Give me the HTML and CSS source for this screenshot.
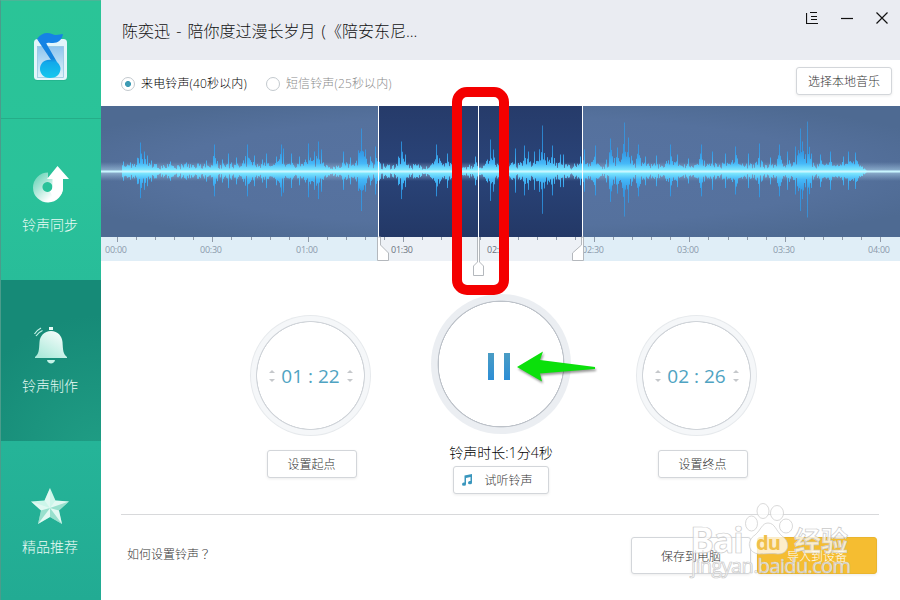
FILE: index.html
```html
<!DOCTYPE html>
<html lang="zh-CN">
<head>
    <meta charset="UTF-8">
    <meta name="viewport" content="width=device-width, initial-scale=1.0">
    <title>铃声制作</title>
    <link rel="stylesheet" href="styles.css">
</head>
<body>
    <div class="window">
        <!-- Sidebar -->
        <nav class="sidebar">
            <div class="logo">
                <svg width="40" height="52" viewBox="0 0 40 52">
                    <defs>
                        <linearGradient id="noteFill" x1="0" y1="0" x2="0" y2="1">
                            <stop offset="0" stop-color="#1583e6"/>
                            <stop offset="0.5" stop-color="#1483dc"/>
                            <stop offset="0.6" stop-color="#12a9ea"/>
                            <stop offset="1" stop-color="#15c8ee"/>
                        </linearGradient>
                        <linearGradient id="screenFill" x1="0" y1="0" x2="0" y2="1">
                            <stop offset="0" stop-color="#8fc4ee"/>
                            <stop offset="1" stop-color="#dff3fb"/>
                        </linearGradient>
                    </defs>
                    <rect x="4" y="9" width="33" height="41" rx="3.5" fill="#1da886" opacity="0.5"/>
                    <rect x="4" y="8" width="33" height="41" rx="3.5" fill="#e2f5fb"/>
                    <rect x="7.5" y="15.5" width="26" height="31" fill="url(#screenFill)" stroke="#8ec3df" stroke-width="0.7"/>
                    <path d="M7 8 C11 2 17 1 22 3 C26 5 30 3 33 3 C32 9 28 12 23 12 C20 12 18 11 15 13 Z" fill="#1583e6"/>
                    <path d="M7 8 L16 12 L27 31 C30 34 30.500 36 30.500 38 C30 44 26 47 20 47 C13 47 10 42 10 38 C10 32 15 28 21 29 Z" fill="url(#noteFill)"/>
                </svg>
            </div>
            <a class="nav-item">
                <svg width="40" height="40" viewBox="0 0 40 40">
                    <defs>
                        <linearGradient id="syncFill" x1="0" y1="0" x2="0.8" y2="0.8">
                            <stop offset="0" stop-color="#fff" stop-opacity="0.2"/>
                            <stop offset="0.9" stop-color="#fff"/>
                        </linearGradient>
                    </defs>
                    <path d="M18 8.500 A15 15 0 1 0 33 23 L28 15 H18 Z M17.500 18 A5 5 0 1 1 17.400 18 Z" fill="url(#syncFill)" fill-rule="evenodd"/>
                    <path d="M27.500 2 L39 15 H33 V24 C33 29 29 34 24 35 L20 27.500 Q22.500 26 22.500 22 V15 H17 Z" fill="#fff"/>
                </svg>
                <span>铃声同步</span>
            </a>
            <a class="nav-item active">
                <svg width="40" height="40" viewBox="0 0 40 40">
                    <defs>
                        <linearGradient id="bellFill" x1="1" y1="0" x2="0.3" y2="1">
                            <stop offset="0" stop-color="#fff"/>
                            <stop offset="1" stop-color="#aeeadb"/>
                        </linearGradient>
                    </defs>
                    <rect x="19" y="2" width="4" height="3" fill="#e6faf5"/>
                    <path d="M21 6 C28 6 32 11 32.500 17 C33 25 33 29 37 32 L37 33 L5 33 L5 32 C9 29 9 25 9.500 17 C10 11 14 6 21 6 Z" fill="url(#bellFill)"/>
                    <path d="M17 35 L25 35 C24.500 39.500 17.500 39.500 17 35 Z" fill="#c5f3e8"/>
                    <path d="M4.500 9 Q7 5 11 3 M6 11 Q8 7.500 12.500 5.500" fill="none" stroke="#c5f3e8" stroke-width="1.2"/>
                </svg>
                <span>铃声制作</span>
            </a>
            <a class="nav-item">
                <svg width="40" height="40" viewBox="0 0 40 40">
                    <path d="M20 2 L25.500 14.500 L39 15.500 L29 24.500 L32 38 L20 31 L8 38 L11 24.500 L1 15.500 L14.500 14.500 Z" fill="#cdf6ea"/>
                    <path d="M20 22 L20 2 L14.500 14.500 Z M20 22 L1 15.500 L11 24.500 Z M20 22 L8 38 L20 31 Z M20 22 L32 38 L29 24.500 Z M20 22 L39 15.500 L25.500 14.500 Z" fill="#fff" opacity="0.4"/>
                    <path d="M20 22 L39 15.500 L29 24.500 Z M20 22 L20 31 L32 38 Z M20 22 L11 24.500 L8 38 Z" fill="#63c9b0" opacity="0.5"/>
                </svg>
                <span>精品推荐</span>
            </a>
        </nav>

        <main class="main">
            <header class="titlebar">
                <h1>陈奕迅 - 陪你度过漫长岁月 (《陪安东尼...</h1>
                <div class="window-buttons">
                    <svg width="12" height="12" viewBox="0 0 12 12"><path d="M0.500 1 V11.500 H12 M4 0.500 H11 M5 4.500 H11 M5 7.500 H11" /></svg>
                    <svg width="12" height="12" viewBox="0 0 12 12"><path d="M0 6.500 H12" /></svg>
                    <svg width="12" height="12" viewBox="0 0 12 12"><path d="M0.500 0.500 L11.500 11.500 M11.500 0.500 L0.500 11.500" /></svg>
                </div>
            </header>

            <section class="options">
                <label class="radio checked"><i></i>来电铃声(40秒以内)</label>
                <label class="radio"><i></i>短信铃声(25秒以内)</label>
                <button class="btn btn-local">选择本地音乐</button>
            </section>

            <!-- Waveform, ruler and trim handles -->
            <section class="timeline">
                <svg id="timeline" width="799" height="172" viewBox="0 0 799 172">
                    <defs>
                        <linearGradient id="waveFill" gradientUnits="userSpaceOnUse" x1="0" y1="15" x2="0" y2="116">
                            <stop offset="0" stop-color="#2f9ff0" stop-opacity="0.6"/>
                            <stop offset="0.3" stop-color="#2d9dee" stop-opacity="0.85"/>
                            <stop offset="0.42" stop-color="#45b8f8"/>
                            <stop offset="0.5" stop-color="#8cf2ff"/>
                            <stop offset="0.58" stop-color="#45b8f8"/>
                            <stop offset="0.7" stop-color="#2d9dee" stop-opacity="0.85"/>
                            <stop offset="1" stop-color="#2f9ff0" stop-opacity="0.6"/>
                        </linearGradient>
                        <linearGradient id="glowFill" x1="0" y1="0" x2="0" y2="1">
                            <stop offset="0" stop-color="#a9cbe8" stop-opacity="0"/>
                            <stop offset="0.5" stop-color="#b4dcf0" stop-opacity="0.65"/>
                            <stop offset="1" stop-color="#a9cbe8" stop-opacity="0"/>
                        </linearGradient>
                        <radialGradient id="bgFill" cx="0.5" cy="0.5" r="0.6">
                            <stop offset="0" stop-color="#5773a2"/>
                            <stop offset="0.7" stop-color="#55719d"/>
                            <stop offset="1" stop-color="#4e6a92"/>
                        </radialGradient>
                        <linearGradient id="rangeFill" x1="0" y1="0" x2="0" y2="1">
                            <stop offset="0" stop-color="#263b6a"/>
                            <stop offset="0.5" stop-color="#2a4479"/>
                            <stop offset="1" stop-color="#233866"/>
                        </linearGradient>
                    </defs>
                    <rect width="799" height="131" fill="url(#bgFill)"/>
                    <rect x="278" width="204" height="131" fill="url(#rangeFill)"/>
                    <rect y="56" width="799" height="19" fill="url(#glowFill)"/>
                    <path id="wave" stroke="url(#waveFill)" fill="none"/>
                    <rect y="64.500" width="799" height="2" fill="#c9f6ff"/>
                    <rect y="131" width="799" height="24" fill="#e0eef7"/>
                    <rect x="278" y="131" width="204" height="24" fill="#edf1f6"/>
                    <path id="ticks" stroke="#8f9aa8" fill="none"/>
                    <g id="labels" class="ruler-labels"></g>
                    <g class="handle">
                        <path d="M277.500 0 V131 M377.500 0 V131 M481.500 0 V131" class="handle-line"/>
                        <path d="M277.500 131 H279.500 V139 L287.500 147 V154.500 H276.500 V131"/>
                        <path d="M482.500 131 H480.500 V139 L471.500 147 V154.500 H482.500 Z"/>
                        <path d="M376.500 131 V156 L372.500 160 V169.500 H382.500 V160 L378.500 156 V131"/>
                    </g>
                </svg>
            </section>

            <section class="controls">
                <div class="control">
                    <div class="dial">
                        <span class="spin"></span><span class="time">01 : 22</span><span class="spin"></span>
                    </div>
                    <button class="btn btn-point">设置起点</button>
                </div>
                <div class="control control-play">
                    <div class="dial dial-play"><i></i><i></i></div>
                    <p class="duration">铃声时长:1分4秒</p>
                    <button class="btn btn-preview">
                        <svg width="12" height="12" viewBox="0 0 12 12"><path d="M3.500 1.500 L11 0 V8.500 A2 1.700 0 1 1 9.500 7 V3 L5 4 V10 A2 1.700 0 1 1 3.500 8.500 Z" fill="#3996bd"/></svg>
                        试听铃声
                    </button>
                </div>
                <div class="control control-end">
                    <div class="dial">
                        <span class="spin"></span><span class="time">02 : 26</span><span class="spin"></span>
                    </div>
                    <button class="btn btn-point">设置终点</button>
                </div>
            </section>

            <footer class="footer">
                <a class="help">如何设置铃声<span lang="ja">？</span></a>
                <button class="btn btn-save">保存到电脑</button>
                <button class="btn btn-import">导入到设备</button>
            </footer>
        </main>

        <!-- Annotations over the window -->
        <div class="highlight"></div>
        <svg class="arrow" width="84" height="36" viewBox="0 0 84 36">
            <path d="M2 17 L28 1.500 L25 10 L80 17 V19 L25 23.500 L27 31.500 Z"/>
        </svg>
        <svg class="watermark" width="170" height="85" viewBox="0 0 170 85">
            <text x="4" y="54" font-size="36" font-weight="bold" textLength="54">Bai</text>
            <ellipse cx="65.500" cy="24.500" rx="6" ry="7.500"/>
            <ellipse cx="77" cy="12" rx="6" ry="7.500"/>
            <ellipse cx="91" cy="14" rx="6.500" ry="7.500"/>
            <ellipse cx="100" cy="27" rx="6.500" ry="7"/>
            <path d="M82 24 C76 24 75 31 69 36 C60 42 62 54 73 55 C79 55 86 54 92 55 C103 55 105 43 96 37 C90 32 89 24 82 24 Z"/>
            <text x="70" y="51" font-size="20" font-weight="bold" class="du" textLength="25">du</text>
            <text x="108" y="52" font-size="27" font-weight="bold" textLength="54">经验</text>
            <text x="5" y="74" font-size="20" textLength="160">jingyan.baidu.com</text>
        </svg>
    </div>

    <script>
        // Loud spots of the song: [x, height]
        const peaks = [
            [22, 10], [29, 9], [39, 29], [43, 20], [46, 16], [50, 11], [69, 10], [85, 9], [105, 11], [113, 27],
            [121, 12], [127, 18], [135, 14], [146, 27], [153, 16], [161, 12], [165, 18], [175, 15], [180, 27],
            [182, 23], [190, 18], [198, 15], [207, 28], [213, 20], [217, 30], [220, 22], [242, 20], [249, 14],
            [260, 43], [264, 22], [269, 15], [274, 25], [300, 30], [304, 17], [335, 27], [346, 18], [374, 15],
            [389, 32], [392, 22], [402, 18], [414, 23], [423, 26], [427, 20], [433, 20], [441, 46], [451, 26],
            [459, 17], [462, 17], [479, 15], [483, 22], [494, 26], [509, 33], [516, 24], [523, 49], [527, 34],
            [537, 27], [544, 15], [555, 16], [569, 27], [576, 17], [587, 13], [600, 27], [611, 20], [624, 18],
            [634, 25], [647, 18], [658, 28], [669, 14], [678, 27], [686, 20], [694, 25], [699, 43], [701, 30],
            [706, 50], [719, 17], [729, 20], [742, 15], [747, 20], [754, 19]
        ];
        const middle = 65.5;
        let seed = 7;

        function random() {
            seed = (seed * 16807) % 2147483647;
            return seed / 2147483647;
        }

        // Quiet bars get louder close to a peak
        let wave = '';
        for (let x = 21; x < 766; x++) {
            let height = 2 + random() * 6;
            peaks.forEach(([px, h]) => {
                const d = Math.abs(px - x);
                if (d === 0) height = Math.max(height, h);
                else if (d < 7) height = Math.max(height, h * (0.15 + random() * 0.6) * (1 - d / 9));
            });
            if (x > 758) height = Math.min(height, (766 - x));
            wave += `M${x + 0.5} ${middle - height}V${middle + height * 0.92}`;
        }
        document.getElementById('wave').setAttribute('d', wave);

        // Ruler: one long tick every 30 seconds, four short ones between
        let ticks = '';
        let labels = '';
        for (let i = 0; i <= 40; i++) {
            const x = Math.floor(16.5 + i * 19.08) + 0.5;
            ticks += `M${x} 131V${i % 5 === 0 ? 136 : 134}`;
            if (i % 5 === 0) {
                const seconds = i * 6;
                const text = `0${Math.floor(seconds / 60)}:${seconds % 60 === 0 ? '00' : '30'}`;
                const dark = i === 15 || i === 20 ? ' class="selected"' : '';
                labels += `<text x="${x - 12.5}" y="147" textLength="22"${dark}>${text}</text>`;
            }
        }
        document.getElementById('ticks').setAttribute('d', ticks);
        document.getElementById('labels').innerHTML = labels;
    </script>
</body>
</html>
```
FILE: styles.css
```css
* {
    box-sizing: border-box;
}

body {
    margin: 0;
    font-family: "Open Sans", "Noto Sans CJK SC", sans-serif;
    font-size: 12px;
    font-weight: 300;
    color: #333;
}

.window {
    position: relative;
    display: flex;
    width: 900px;
    height: 600px;
    background-color: #fff;
    overflow: hidden;
}

/* Sidebar */
.sidebar {
    width: 101px;
    flex: none;
    display: flex;
    flex-direction: column;
    background: linear-gradient(#2ac497 0%, #2ac29a 30%, #25b498 74%, #22ab93 100%);
    border-left: 1px solid #4b9c8b;
    border-top: 1px solid #4bb597;
}

.logo {
    flex: none;
    height: 118px;
    padding: 30px 0 0 29px;
    border-bottom: 1px solid #25ad88;
}

.nav-item {
    flex: none;
    height: 161px;
    padding: 45px 2px 0 0;
    display: flex;
    flex-direction: column;
    align-items: center;
    gap: 11px;
    color: #e9fbf5;
    font-size: 14px;
    line-height: 20px;
}

.nav-item.active {
    background: radial-gradient(circle at 100% 110%, #209e85, #168a77 70%);
}

/* Title bar */
.main {
    flex: 1;
    display: flex;
    flex-direction: column;
}

.titlebar {
    height: 60px;
    padding: 0 12px 0 21px;
    display: flex;
    justify-content: space-between;
    background-color: #eaecf2;
}

h1 {
    margin: 19px 0 0;
    font-size: 16px;
    font-weight: 300;
    line-height: 24px;
    word-spacing: 2px;
    text-spacing-trim: space-all;
    color: #111;
}

.window-buttons {
    display: flex;
    gap: 23px;
    padding-top: 12px;
}

.window-buttons path {
    fill: none;
    stroke: #111;
    stroke-width: 1.2;
}

/* Ringtone type */
.options {
    height: 46px;
    padding: 7px 8px 0 20px;
    display: flex;
    align-items: flex-start;
}

.radio {
    display: flex;
    align-items: center;
    gap: 6px;
    margin: 9px 19px 0 0;
    line-height: 16px;
    letter-spacing: 0.15px;
    color: #8a8a8a;
}

.radio i {
    width: 14px;
    height: 14px;
    border: 1px solid #c3c9ce;
    border-radius: 50%;
}

.radio.checked {
    color: #000;
}

.radio.checked i {
    background: radial-gradient(circle, #3e9bb4 2.6px, #fff 3.4px);
}

.btn {
    height: 28px;
    padding: 0;
    border: 1px solid #d3d6da;
    border-radius: 3px;
    background-color: #fff;
    box-shadow: 0 1px 3px rgba(0, 0, 0, 0.08);
    font-family: inherit;
    font-size: 12px;
    font-weight: 300;
    color: #333;
}

.btn-local {
    width: 96px;
    margin-left: auto;
}

/* Timeline */
.timeline {
    height: 172px;
}

.timeline svg {
    display: block;
}

.ruler-labels {
    font-size: 9px;
    font-weight: 400;
    fill: #8b9aab;
}

.ruler-labels .selected {
    fill: #6b7480;
}

.handle path {
    fill: #fff;
    stroke: #b4b8bd;
}

.handle .handle-line {
    stroke: #fff;
}

/* Start, play and end dials */
.controls {
    height: 236px;
    padding: 16px 0 0 149px;
    display: grid;
    grid-template-columns: 121px 140px 121px;
    column-gap: 62px;
    align-items: start;
}

.control {
    display: flex;
    flex-direction: column;
    align-items: center;
    padding-top: 21px;
}

.control-play {
    padding-top: 0;
    margin: 0 2px 0 -2px;
}

.control-end {
    margin: 0 -1px 0 1px;
}

.dial {
    width: 121px;
    height: 121px;
    flex: none;
    display: flex;
    justify-content: center;
    align-items: center;
    gap: 5px;
    border-radius: 50%;
    background: radial-gradient(circle, #fff 53px, #d0d4d9 53.5px, #d0d4d9 54px, #f5f7f9 54.8px, #f5f7f9 59px, #e6e9ec 60px);
}

.time {
    font-size: 19px;
    font-weight: 400;
    width: 62px;
    text-align: center;
    white-space: nowrap;
    color: #4fa3c2;
}

.spin {
    height: 12px;
    display: flex;
    flex-direction: column;
    justify-content: space-between;
}

.spin::before,
.spin::after {
    content: "";
    border: 3px solid transparent;
    border-top-width: 0;
    border-bottom: 3px solid #c5c8cb;
}

.spin::after {
    transform: rotate(180deg);
}

.dial-play {
    width: 140px;
    height: 140px;
    gap: 10px;
    padding: 4px 4px 0 0;
    background: radial-gradient(circle, #fff 62px, #bdc2c9 62.5px, #bdc2c9 63px, #ebeef2 63.8px);
}

.dial-play i {
    width: 6px;
    height: 27px;
    background: linear-gradient(#4a9cc4, #2c8ed6);
}

.duration {
    margin: 8px 0 2px;
    font-size: 14px;
    line-height: 22px;
    color: #000;
}

.btn-point {
    width: 90px;
    margin: 14px 0 0 2px;
}

.control-end .btn-point {
    margin-left: 12px;
}

.btn-preview {
    width: 96px;
    display: flex;
    justify-content: center;
    align-items: center;
    gap: 11px;
    padding-right: 8px;
}

/* Footer */
.footer {
    height: 86px;
    margin: 0 21px 0 20px;
    padding: 22px 2px 0 6px;
    display: flex;
    align-items: flex-start;
    border-top: 1px solid #d8d9db;
}

.help {
    margin: 7px auto 0 0;
    line-height: 20px;
    color: #333;
}

.help span {
    font-family: "Noto Sans CJK JP", sans-serif;
    text-spacing-trim: space-all;
}

.btn-save,
.btn-import {
    width: 120px;
    height: 37px;
}

.btn-import {
    margin-left: 6px;
    border-color: #eab52e;
    background-color: #f5bd31;
    color: #fff;
}

/* Annotations */
.highlight {
    position: absolute;
    left: 452px;
    top: 87px;
    width: 57px;
    height: 208px;
    border: 10px solid #f40000;
    border-radius: 15px;
}

.arrow {
    position: absolute;
    left: 515px;
    top: 350px;
    fill: #0be00b;
    filter: drop-shadow(1px 2px 1px rgba(0, 0, 0, 0.4));
}

.watermark {
    position: absolute;
    left: 686px;
    top: 499px;
    fill: #fff;
    fill-opacity: 0.75;
    stroke: #c9c9c9;
    stroke-width: 0.7;
    font-weight: 400;
}

.watermark .du {
    fill: #f0c04a;
    fill-opacity: 1;
    stroke: none;
}
```
